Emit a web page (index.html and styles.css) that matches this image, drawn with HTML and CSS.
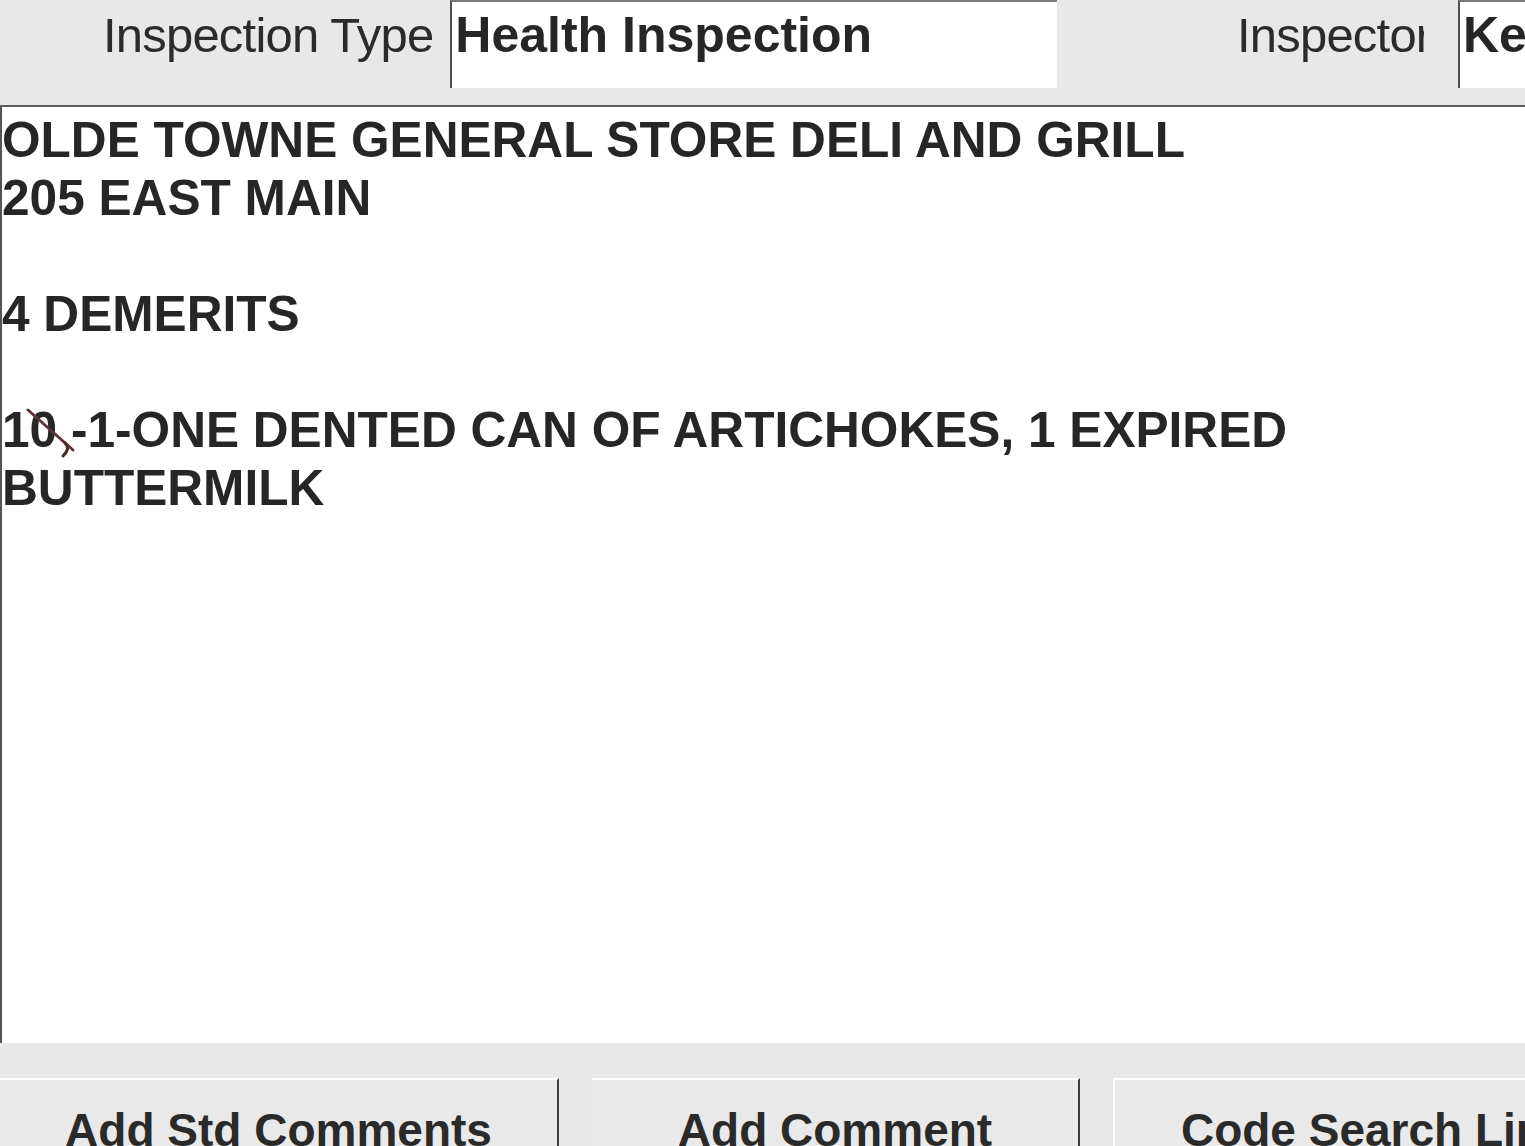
FILE: index.html
```html
<!DOCTYPE html>
<html lang="en">
<head>
    <meta charset="UTF-8">
    <meta name="viewport" content="width=device-width, initial-scale=1.0">
    <title>Inspection Comments</title>
    <link rel="stylesheet" href="styles.css">
</head>
<body>
    <div class="toolbar">
        <span class="field-label type-label">Inspection Type</span>
        <div class="field-value type-value">Health Inspection</div>
        <span class="field-label inspector-label">Inspector</span>
        <div class="field-value inspector-value">Kevin</div>
    </div>

    <!-- comment box, the pen mark on "10" sits over the text -->
    <div class="comments">
        <div class="comment-text">OLDE TOWNE GENERAL STORE DELI AND GRILL
205 EAST MAIN

4 DEMERITS

10 -1-ONE DENTED CAN OF ARTICHOKES, 1 EXPIRED BUTTERMILK</div>
        <svg class="pen-mark" width="60" height="60" viewBox="0 0 60 60">
            <path d="M7 10 L52 50" fill="none" stroke="#5b3434" stroke-width="3" stroke-linecap="round"/>
            <path d="M44 43 Q50 48 42 56" fill="none" stroke="#4a2c2c" stroke-width="3" stroke-linecap="round"/>
        </svg>
    </div>

    <div class="button-bar">
        <button class="bar-button std-button">Add <u>S</u>td Comments</button>
        <button class="bar-button add-button"><u>A</u>dd Comment</button>
        <button class="bar-button code-button">Code Search Links</button>
    </div>
</body>
</html>
```

FILE: styles.css
```css
html, body {
    margin: 0;
    padding: 0;
    overflow: hidden;
}
body {
    font-family: "Liberation Sans", Arial, sans-serif;
    background-color: #e8e8e8;
    color: #262626;
    width: 1525px;
    height: 1146px;
}
.toolbar {
    display: flex;
    align-items: flex-start;
    height: 105px;
    border-bottom: 2px solid #5e5e5e;
    overflow: hidden;
}
.field-label {
    flex-shrink: 0;
    font-size: 49px;
    letter-spacing: -0.8px;
    line-height: 70px;
    color: #2b2b2b;
    white-space: nowrap;
}
.type-label {
    margin-left: 103px;
    margin-right: 17px;
}
.inspector-label {
    margin-left: auto;
    margin-right: 34px;
    width: 187px;
    overflow: hidden;
}
.field-value {
    flex-shrink: 0;
    height: 88px;
    background: #ffffff;
    border-left: 2px solid #505050;
    border-top: 2px solid #7a7a7a;
    box-sizing: border-box;
    font-size: 50px;
    font-weight: bold;
    line-height: 66px;
    padding-left: 3px;
    white-space: nowrap;
    overflow: hidden;
}
.type-value {
    width: 607px;
}
.inspector-value {
    width: 67px;
}
.comments {
    position: relative;
    height: 936px;
    box-sizing: border-box;
    background: #ffffff;
    border-left: 2px solid #555555;
    padding-top: 4px;
}
.comment-text {
    font-size: 49.6px;
    font-weight: bold;
    line-height: 58px;
    white-space: pre-wrap;
    color: #262626;
}
.pen-mark {
    position: absolute;
    left: 19px;
    top: 293px;
}
.button-bar {
    display: flex;
    gap: 33px;
    padding-top: 35px;
}
.bar-button {
    flex-shrink: 0;
    height: 90px;
    margin: 0;
    padding: 11px 0 0 0;
    background: #e9e9e9;
    border: none;
    border-top: 2px solid #ffffff;
    border-right: 2px solid #3c3c3c;
    box-sizing: border-box;
    font-family: "Liberation Sans", Arial, sans-serif;
    font-size: 46px;
    font-weight: bold;
    line-height: 60px;
    color: #2a2a2a;
    text-align: center;
    vertical-align: top;
    white-space: nowrap;
}
.bar-button u {
    text-underline-offset: 4px;
}
.std-button {
    width: 559px;
}
.add-button {
    width: 488px;
}
.code-button {
    width: 550px;
    border-left: 2px solid #ffffff;
}
```
